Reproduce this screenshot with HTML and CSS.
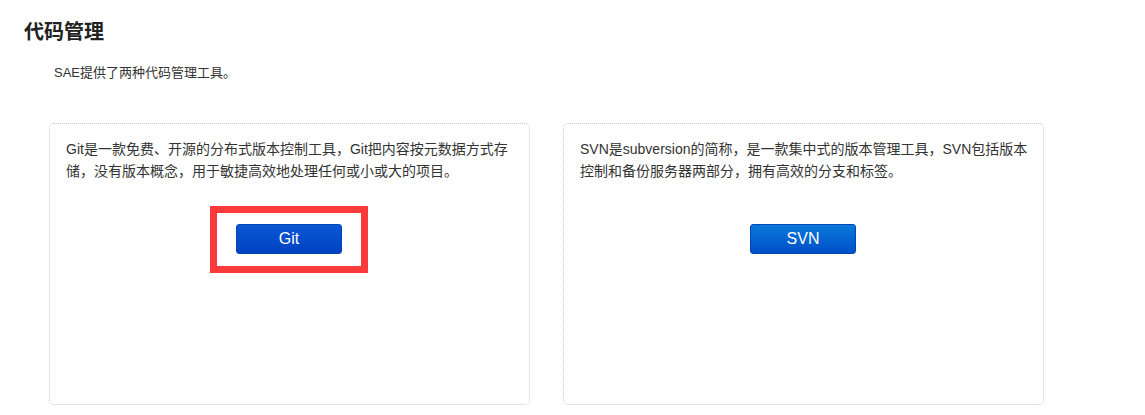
FILE: index.html
```html
<!DOCTYPE html>
<html lang="zh-CN">
<head>
    <meta charset="UTF-8">
    <title>代码管理</title>
    <link rel="stylesheet" href="styles.css">
</head>
<body>
    <div id="page">
        <h2 class="page-title">代码管理</h2>
        <p class="page-desc">SAE提供了两种代码管理工具。</p>

        <div class="tool-list">
            <div class="tool-card">
                <p class="tool-text">Git是一款免费、开源的分布式版本控制工具，Git把内容按元数据方式存储，没有版本概念，用于敏捷高效地处理任何或小或大的项目。</p>
                <div class="tool-action">
                    <a class="btn btn-git" href="#">Git</a>
                </div>
                <div class="mark"></div>
            </div>
            <div class="tool-card">
                <p class="tool-text">SVN是subversion的简称，是一款集中式的版本管理工具，SVN包括版本控制和备份服务器两部分，拥有高效的分支和标签。</p>
                <div class="tool-action">
                    <a class="btn" href="#">SVN</a>
                </div>
            </div>
        </div>
    </div>
</body>
</html>
```

FILE: styles.css
```css
body {
    margin: 0;
    background: #fff;
    color: #333;
    font-family: "Liberation Sans", Arial, "Noto Sans CJK SC", sans-serif;
}
#page {
    padding-top: 20px;
}
.page-title {
    margin: 0;
    padding-left: 24px;
    font-family: "Liberation Serif", "Noto Sans CJK SC", serif;
    font-size: 20px;
    line-height: 24px;
    font-weight: bold;
    color: #222;
}
.page-desc {
    margin: 19px 0 0 54px;
    font-size: 13px;
    line-height: 20px;
}
.tool-list {
    display: flex;
    gap: 33px;
    padding-left: 49px;
    margin-top: 40px;
}
.tool-card {
    position: relative;
    box-sizing: border-box;
    width: 481px;
    height: 282px;
    border: 1px dotted #c8c8c8;
    border-radius: 5px;
    padding: 14px 17px 0 16px;
}
.tool-text {
    margin: 0 -7px 0 0;
    font-size: 14px;
    line-height: 22px;
    color: #333;
}
.tool-action {
    display: flex;
    justify-content: center;
    margin-top: 42px;
}
.btn {
    display: block;
    box-sizing: border-box;
    width: 106px;
    height: 30px;
    line-height: 28px;
    text-align: center;
    color: #fff;
    font-size: 16px;
    text-decoration: none;
    border: 1px solid #0046b4;
    border-radius: 3px;
    background: linear-gradient(#0a78d9, #004fc8);
}
.btn-git {
    background: linear-gradient(#0a58d2, #0042c2);
}
.mark {
    position: absolute;
    left: 160px;
    top: 82px;
    width: 158px;
    height: 67px;
    box-sizing: border-box;
    border: 7px solid #fd3a3b;
}
```
